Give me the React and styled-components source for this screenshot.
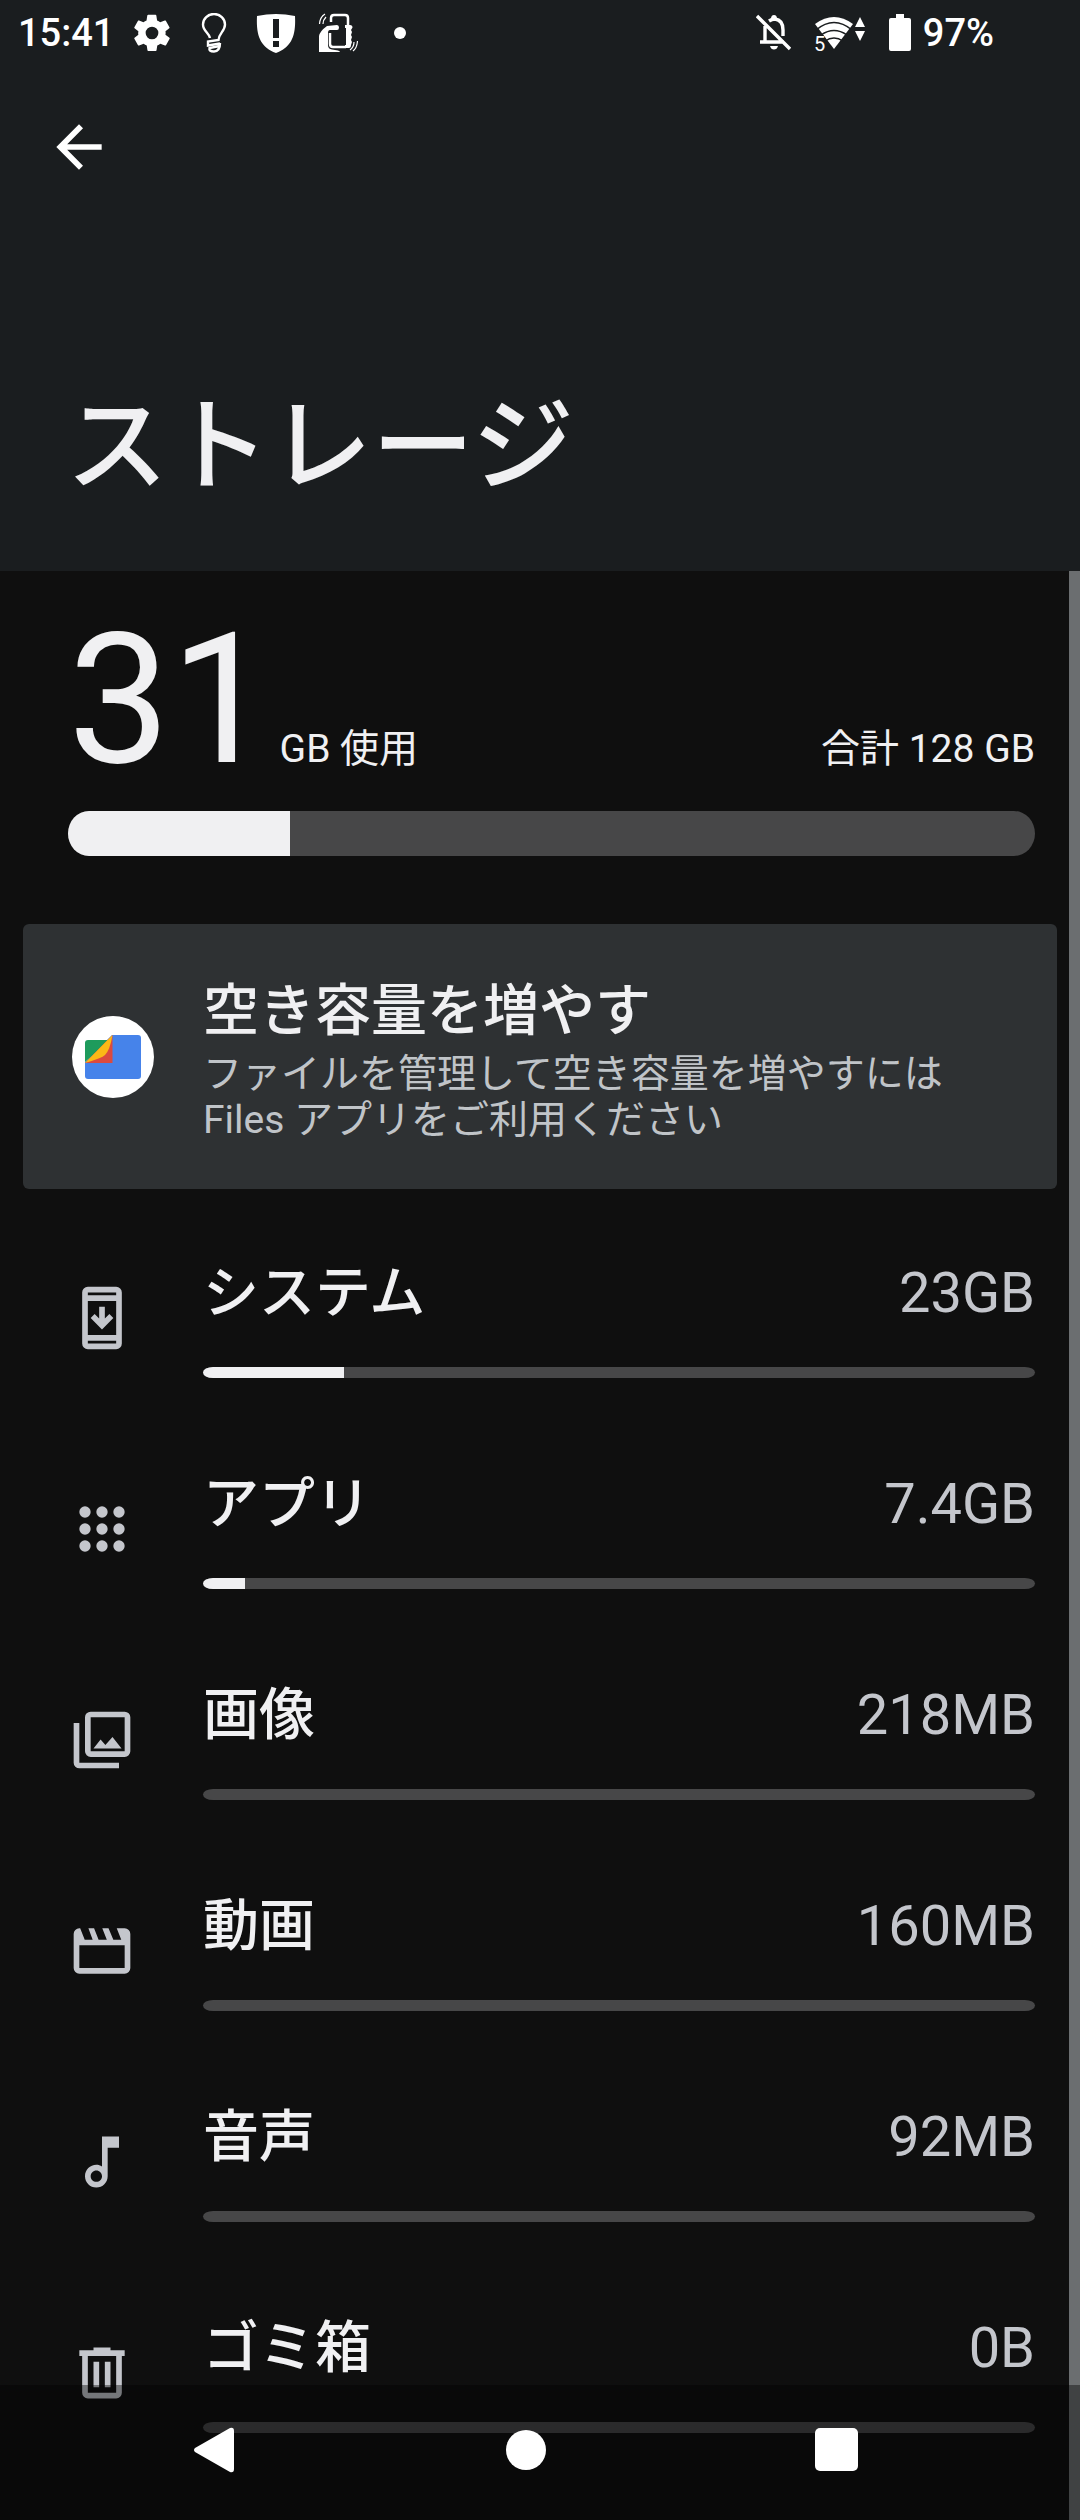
import styled, { createGlobalStyle } from 'styled-components'

const GlobalStyle = createGlobalStyle`
	*,
	*::before,
	*::after {
		box-sizing: border-box;
	}

	body {
		margin: 0;
		background-color: #0f0f0f;
		color: #f0f0f2;
		font-family: Roboto, 'Noto Sans CJK JP', sans-serif;
	}
`

const Page = styled.div`
	display: flex;
	flex-direction: column;
	min-height: 100vh;
`

const Header = styled.header`
	display: flex;
	flex-direction: column;
	background-color: #1a1d1f;
`

const StatusBar = styled.div`
	display: flex;
	align-items: center;
	justify-content: space-between;
	height: 68px;
	padding: 0 86px 2px 18px;
	color: #fff;
	font-size: 38px;
	font-weight: 500;
	line-height: 48px;
`

const StatusGroup = styled.div`
	display: flex;
	align-items: center;
	gap: ${({ $gap }) => $gap}px;
`

const StatusIcon = styled.svg`
	display: block;
	flex: none;
	width: ${({ $width }) => $width || 40}px;
	height: ${({ $height }) => $height || 40}px;
`

const Dot = styled.span`
	width: 12px;
	height: 12px;
	margin-left: 14px;
	border-radius: 50%;
	background-color: #fff;
`

const BackButton = styled.button`
	align-self: flex-start;
	width: 68px;
	height: 68px;
	margin: 45px 0 0 45px;
	padding: 0;
	border: 0;
	background: none;
	color: #fff;
`

const Title = styled.h1`
	margin: 0;
	padding: 196px 66px 54px;
	font-size: 102px;
	font-weight: 500;
	line-height: 140px;
`

const Main = styled.main`
	display: flex;
	flex: 1;
`

const Content = styled.div`
	flex: 1;
	min-width: 0;
`

const Scrollbar = styled.div`
	width: 11px;
	background-color: #6b6e70;
`

const Summary = styled.section`
	padding: 38px 34px 68px 68px;
`

const SummaryText = styled.div`
	display: flex;
	align-items: baseline;
	justify-content: space-between;
	margin-bottom: 20px;
	font-size: 39px;
	line-height: 46px;
`

const Amount = styled.span`
	margin-right: 7px;
	font-size: 182px;
	line-height: 182px;
`

const Track = styled.div`
	height: ${({ $large }) => ($large ? 45 : 11)}px;
	overflow: hidden;
	border-radius: ${({ $large }) => ($large ? 21 : 10)}px / 50%;
	background-color: #474748;
`

const Fill = styled.div`
	height: 100%;
	background-color: #f0f0f2;
`

const Card = styled.a`
	display: flex;
	align-items: center;
	gap: 49px;
	height: 265px;
	margin: 0 12px 23px 23px;
	padding: 0 22px 0 49px;
	border-radius: 6px;
	background-color: #2e3133;
	color: inherit;
	text-decoration: none;
`

const FilesLogo = styled.svg`
	flex: none;
	width: 82px;
	height: 82px;
`

const CardTitle = styled.h2`
	margin: 0;
	padding: 8px 0 7px;
	font-size: 56px;
	font-weight: 500;
	line-height: 66px;
`

const CardText = styled.p`
	margin: 0;
	color: #c0c4c8;
	font-size: 39px;
	line-height: 46px;
`

const List = styled.ul`
	margin: 0;
	padding: 0;
	list-style: none;
`

const Row = styled.a`
	display: flex;
	align-items: center;
	gap: 67px;
	height: 211px;
	padding: 0 34px 0 68px;
	color: inherit;
	text-decoration: none;
`

const Icon = styled.svg`
	display: block;
	flex: none;
	width: 68px;
	height: 68px;
	fill: currentColor;
	fill-rule: evenodd;
`

const RowIcon = styled(Icon)`
	color: #c4c6cc;
`

const RowBody = styled.div`
	flex: 1;
`

const RowText = styled.div`
	display: flex;
	justify-content: space-between;
	margin-bottom: 39px;
	font-size: 56px;
	line-height: 70px;
`

const Name = styled.span`
	font-weight: 500;
`

const Value = styled.span`
	color: #c4c6cc;
`

const NavBar = styled.nav`
	position: fixed;
	right: 0;
	bottom: 0;
	left: 0;
	display: flex;
	height: 135px;
	padding: 0 87px 6px 58px;
	background-color: rgba(0, 0, 0, 0.4);
`

const NavButton = styled.button`
	display: flex;
	flex: 1;
	align-items: center;
	justify-content: center;
	padding: 0;
	border: 0;
	background: none;
	color: #fff;
`

const NavIcon = styled.svg`
	width: 46px;
	height: 46px;
	fill: currentColor;
`

const items = [
	{
		name: 'システム',
		value: '23GB',
		percent: 17,
		icon: 'M7 1h10a2 2 0 0 1 2 2v18a2 2 0 0 1-2 2H7a2 2 0 0 1-2-2V3a2 2 0 0 1 2-2zM7 3v1h10V3zM7 6v12h10V6zM7 20v1h10v-1zM16 12l-1.4-1.4-1.6 1.6V8h-2v4.2l-1.6-1.6L8 12l4 4.1z',
	},
	{
		name: 'アプリ',
		value: '7.4GB',
		percent: 5,
		icon: [6, 12, 18]
			.flatMap(y => [4, 10, 16].map(x => `M${x} ${y}a2 2 0 1 1 4 0a2 2 0 1 1-4 0z`))
			.join(''),
	},
	{
		name: '画像',
		value: '218MB',
		percent: 0,
		icon: 'M8 2h12a2 2 0 0 1 2 2v12a2 2 0 0 1-2 2H8a2 2 0 0 1-2-2V4a2 2 0 0 1 2-2zM8 4v12h12V4zM9 15l2.5-3.2 1.7 2 2.5-2.900 3.200 4.100zM2 6h2v14h14v2H4a2 2 0 0 1-2-2z',
	},
	{
		name: '動画',
		value: '160MB',
		percent: 0,
		icon: 'M4 4h.3l1.6 4h2.8L7.2 4h2l1.6 4h2.9l-1.6-4h2.2L16 8h2.8l-1.6-4H20a2 2 0 0 1 2 2v12a2 2 0 0 1-2 2H4a2 2 0 0 1-2-2V6a2 2 0 0 1 2-2zM4 10v8h16v-8z',
	},
	{
		name: '音声',
		value: '92MB',
		percent: 0,
		icon: 'M12 3v10.55c-.59-.34-1.27-.55-2-.55-2.21 0-4 1.79-4 4s1.79 4 4 4 4-1.79 4-4V7h4V3h-6zM10 19c-1.1 0-2-.9-2-2s.9-2 2-2 2 .9 2 2-.9 2-2 2z',
	},
	{
		name: 'ゴミ箱',
		value: '0B',
		percent: 0,
		icon: 'M9 3h6v1h5v2h-1v13a2 2 0 0 1-2 2H7a2 2 0 0 1-2-2V6H4V4h5zM7 6v13h10V6zM9 8h2v9H9zM13 8h2v9h-2z',
	},
]

const Meter = ({ label, percent, large }) => (
	<Track
		$large={large}
		role='progressbar'
		aria-label={label}
		aria-valuenow={percent}
		aria-valuemin={0}
		aria-valuemax={100}
	>
		<Fill style={{ width: `${percent}%` }} />
	</Track>
)

const GearIcon = () => (
	<StatusIcon viewBox='1 1 22 22' fill='#fff' fillRule='evenodd'>
		<path d='M19.4 13c0-.3.1-.6.1-1s0-.7-.1-1l2.1-1.6c.2-.2.2-.4.1-.6l-2-3.5c-.1-.2-.4-.3-.6-.2l-2.5 1c-.5-.4-1.1-.7-1.7-1l-.4-2.6c0-.3-.2-.5-.5-.5h-4c-.2 0-.4.2-.5.4L9 5.1c-.6.2-1.1.6-1.7 1L4.9 5.1c-.3-.1-.5 0-.6.2l-2 3.5c-.1.2-.1.5.1.6L4.5 11c0 .3-.1.7-.1 1s0 .7.1 1l-2.1 1.6c-.2.2-.2.4-.1.6l2 3.5c.1.2.4.3.6.2l2.5-1c.5.4 1.1.7 1.7 1l.4 2.6c0 .2.2.4.5.4h4c.2 0 .5-.2.5-.4l.4-2.6c.6-.3 1.2-.6 1.7-1l2.5 1c.2.1.5 0 .6-.2l2-3.5c.1-.2.1-.5-.1-.6zM12 15.5a3.5 3.5 0 1 1 0-7a3.5 3.5 0 0 1 0 7z' />
	</StatusIcon>
)

const BulbIcon = () => (
	<StatusIcon viewBox='0 0 40 40' fill='none' stroke='#fff' strokeWidth='2.4'>
		<path d='M16 25C15 20 9 18 9 11.5a11 10.5 0 0 1 22 0C31 18 25 20 24.5 27L14 28.5v4l12-2' />
		<path d='M26 30c0 5-2 8.5-6 8.5S15 37 15.5 35l10-2' />
	</StatusIcon>
)

const ShieldIcon = () => (
	<StatusIcon viewBox='0 0 40 40' fill='#fff' fillRule='evenodd'>
		<path d='M1 3Q20-1 39 3C40 22 36 34 20 40C4 34 0 22 1 3zM17 6v19h6V6zM17 28v6h6v-6z' />
	</StatusIcon>
)

const PhoneInHandIcon = () => (
	<StatusIcon viewBox='0 0 40 40' fill='none' stroke='#fff' strokeWidth='2.5'>
		<path d='M13 9V5q0-3 3-3h11q3 0 3 3v7M12 20v11q0 3 3 3h13' />
		<path
			d='M1 39V23q1-5 8-10l10-1q2 0 2 2.5T19 17h-7q-2 0-2 3v12q0 4 4 4.5l6 1q2 .5 2 1.5z'
			fill='#fff'
			stroke='none'
		/>
		<path
			d='M27 12h5q2.5 0 2.5 2.5L33 17l1 2-1 3 1 2-1 3 1 2-1 3q0 3-2 3h-4v-3h1V15h-1z'
			fill='#fff'
			stroke='none'
		/>
		<path
			d='M1.5 11Q2 4 7 1M5 11q0-4 3-7M35 38q4-3 4.5-10M32 37q4-3 4-8'
			strokeWidth='1.2'
		/>
	</StatusIcon>
)

const BellOffIcon = () => (
	<StatusIcon $width={36} viewBox='0 -2 36 40' fill='none' stroke='#fff' strokeWidth='3.4'>
		<path d='M1 1l33 33M4 27h24M9 11v16M13 6q3-2 6-2 8 1 8 11v6' />
		<path d='M15 4q0-4 3-4t3 4zM14 31h8q-1 3.5-4 3.5T14 31z' fill='#fff' stroke='none' />
	</StatusIcon>
)

const WifiIcon = () => (
	<StatusIcon $width={52} $height={48} viewBox='0 -4 52 48' fill='#fff'>
		<path d='M1 11Q20-3 39 11L20 36z' />
		<path
			d='M2 17Q20 2 38 17M7 22q13-9 26 0M11 28q9-6 18 0'
			fill='none'
			stroke='#1a1d1f'
			strokeWidth='1.5'
		/>
		<path d='M0 22h9l3 4v14H0z' fill='#1a1d1f' />
		<path d='M41 14l5-10 5 10zM41 18h10l-5 10z' />
		<text x='0' y='38' fontSize='20' fontWeight='400'>
			5
		</text>
	</StatusIcon>
)

const BatteryIcon = () => (
	<StatusIcon $width={24} viewBox='0 0 24 40' fill='#fff'>
		<path d='M8 1h8v4h5q2 0 2 2v29q0 2-2 2H3q-2 0-2-2V7q0-2 2-2h5z' />
	</StatusIcon>
)

const App = () => (
	<>
		<GlobalStyle />
		<Page>
			<Header>
				<StatusBar>
					<StatusGroup $gap={18}>
						<span>15:41</span>
						<StatusGroup $gap={22}>
							<GearIcon />
							<BulbIcon />
							<ShieldIcon />
							<PhoneInHandIcon />
							<Dot />
						</StatusGroup>
					</StatusGroup>
					<StatusGroup $gap={22}>
						<BellOffIcon />
						<WifiIcon />
						<StatusGroup $gap={11}>
							<BatteryIcon />
							<span>97%</span>
						</StatusGroup>
					</StatusGroup>
				</StatusBar>
				<BackButton aria-label='戻る'>
					<Icon viewBox='0 0 24 24'>
						<path d='M20 11H7.83l5.59-5.59L12 4l-8 8 8 8 1.41-1.41L7.83 13H20z' />
					</Icon>
				</BackButton>
				<Title>ストレージ</Title>
			</Header>

			<Main>
				<Content>
					<Summary>
						<SummaryText>
							<span>
								<Amount>31</Amount>
								GB 使用
							</span>
							<span>合計 128 GB</span>
						</SummaryText>
						<Meter label='使用' percent={23} large />
					</Summary>

					<Card href='#files'>
						<FilesLogo viewBox='0 0 82 82'>
							<circle cx='41' cy='41' r='41' fill='#fff' />
							<path
								d='M40 19h26q3 0 3 3v38q0 3-3 3H16q-3 0-3-3V46z'
								fill='#4683ea'
							/>
							<path d='M13 46V27q0-3 3-3h22z' fill='#1e9b5c' />
							<path d='M13 47L40.5 19v28z' fill='#db4a3f' />
							<path d='M13 47L40.5 19Q38 34 33 39Q30 42 13 47z' fill='#fbb916' />
						</FilesLogo>
						<div>
							<CardTitle>空き容量を増やす</CardTitle>
							<CardText>
								ファイルを管理して空き容量を増やすには
								<br />
								Files アプリをご利用ください
							</CardText>
						</div>
					</Card>

					<List>
						{items.map(({ name, value, percent, icon }) => (
							<li key={name}>
								<Row href={`#${name}`}>
									<RowIcon viewBox='0 0 24 24'>
										<path d={icon} />
									</RowIcon>
									<RowBody>
										<RowText>
											<Name>{name}</Name>
											<Value>{value}</Value>
										</RowText>
										<Meter label={name} percent={percent} />
									</RowBody>
								</Row>
							</li>
						))}
					</List>
				</Content>
				<Scrollbar />
			</Main>
		</Page>

		<NavBar>
			<NavButton aria-label='戻る'>
				<NavIcon viewBox='0 0 46 46'>
					<path d='M4 21L39 1q4-1 4 3v38q0 4-4 3L4 25q-2-2 0-4z' />
				</NavIcon>
			</NavButton>
			<NavButton aria-label='ホーム'>
				<NavIcon viewBox='0 0 46 46'>
					<circle cx='23' cy='23' r='20' />
				</NavIcon>
			</NavButton>
			<NavButton aria-label='最近使ったアプリ'>
				<NavIcon viewBox='0 0 46 46'>
					<rect x='1' y='1' width='43' height='43' rx='5' />
				</NavIcon>
			</NavButton>
		</NavBar>
	</>
)

export default App
